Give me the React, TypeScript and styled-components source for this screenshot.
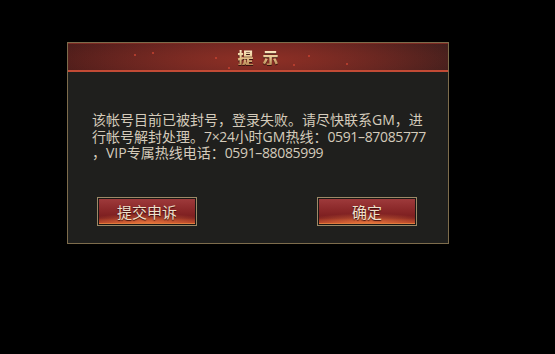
import React from "react";
import styled, { createGlobalStyle } from "styled-components";

const GlobalStyle = createGlobalStyle`
  html, body {
    margin: 0;
    padding: 0;
    background: #000;
  }
  body {
    width: 555px;
    height: 354px;
    overflow: hidden;
    font-family: "Noto Sans CJK SC", "Noto Sans", sans-serif;
  }
`;

const Stage = styled.div`
  padding: 42px 0 0 67px;
`;

const Dialog = styled.div`
  width: 380px;
  height: 200px;
  border: 1px solid #7d6c4c;
  background: #1f1f1d;
  display: flex;
  flex-direction: column;
`;

const Header = styled.div`
  height: 26px;
  border-top: 1px solid #7c2a22;
  border-bottom: 2px solid #c24a35;
  background:
    radial-gradient(ellipse 60% 120% at 50% 60%, rgba(150, 50, 38, 0.85), rgba(90, 28, 24, 0) 100%),
    linear-gradient(90deg, #4a1c1a 0%, #5e2220 40%, #5e2220 60%, #3f1e1c 100%);
  display: flex;
  align-items: center;
  justify-content: center;
  position: relative;
`;

const Title = styled.h1`
  margin: 0 0 0 9px;
  font-family: "Noto Sans CJK SC", serif;
  font-size: 16px;
  font-weight: 900;
  letter-spacing: 9px;
  line-height: 1;
  color: #f0d6a6;
  background: linear-gradient(180deg, #fff1cf 0%, #e6c48c 55%, #b88a56 100%);
  -webkit-background-clip: text;
  background-clip: text;
  -webkit-text-fill-color: transparent;
  filter: drop-shadow(0 1px 0 #3a140f);
`;

const Spark = styled.span<{ $x: number; $y: number }>`
  position: absolute;
  left: ${(p) => p.$x}px;
  top: ${(p) => p.$y}px;
  width: 2px;
  height: 2px;
  background: #c2412f;
  opacity: 0.8;
`;

const Message = styled.p`
  margin: 40px 0 0 0;
  padding: 0 16px 0 24px;
  font-family: "Open Sans", "Noto Sans CJK SC", sans-serif;
  font-size: 14px;
  line-height: 16.5px;
  color: #d4cbbb;
  white-space: nowrap;
`;

const Digits = styled.span`
  letter-spacing: -0.35px;
`;

const LeadPunct = styled.span`
  display: inline-block;
  width: 14px;
`;

const Actions = styled.div`
  margin-top: auto;
  padding: 0 31px 17px 29px;
  display: flex;
  justify-content: space-between;
`;

const GameButton = styled.button`
  width: 100px;
  height: 29px;
  padding: 0;
  border: 1px solid #9c8a68;
  background: #1a1614;
  box-sizing: border-box;
  cursor: pointer;
  position: relative;
  font-family: "Noto Sans CJK SC", sans-serif;
  font-size: 15px;
  color: #f0e0cc;
  text-shadow: 0 1px 1px #3a0d0a;

  &::before {
    content: "";
    position: absolute;
    inset: 1px;
    background:
      radial-gradient(ellipse 70% 40% at 50% 100%, rgba(255, 140, 70, 0.7), rgba(200, 60, 40, 0) 100%),
      linear-gradient(180deg, #9e3a3b 0%, #8a2829 45%, #7a1d1e 80%, #ad3824 100%);
    border-bottom: 1px solid #e07a3c;
  }

  span {
    position: relative;
  }
`;

const sparks = [
  { x: 66, y: 10 },
  { x: 84, y: 8 },
  { x: 147, y: 13 },
  { x: 205, y: 13 },
  { x: 240, y: 11 },
  { x: 278, y: 19 },
  { x: 225, y: 20 },
  { x: 160, y: 23 },
];

export default function App() {
  return (
    <>
      <GlobalStyle />
      <Stage>
        <Dialog>
          <Header>
            {sparks.map((s, i) => (
              <Spark key={i} $x={s.x} $y={s.y} />
            ))}
            <Title>提示</Title>
          </Header>
          <Message>
            该帐号目前已被封号，登录失败。请尽快联系GM，进
            <br />
            行帐号解封处理。<Digits>7×24</Digits>小时GM热线：<Digits>0591–87085777</Digits>
            <br />
            <LeadPunct>，</LeadPunct>VIP专属热线电话：<Digits>0591–88085999</Digits>
          </Message>
          <Actions>
            <GameButton>
              <span>提交申诉</span>
            </GameButton>
            <GameButton>
              <span>确定</span>
            </GameButton>
          </Actions>
        </Dialog>
      </Stage>
    </>
  );
}
